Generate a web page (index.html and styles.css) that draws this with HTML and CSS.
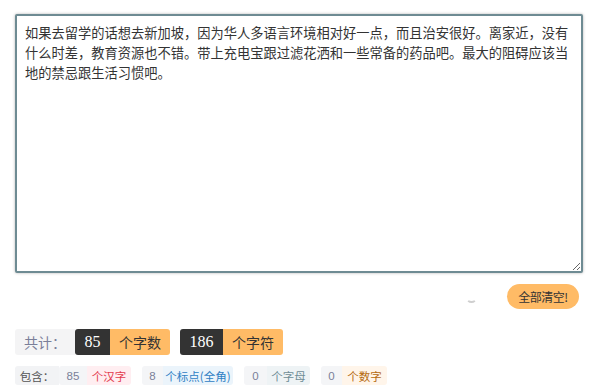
FILE: index.html
```html
<!DOCTYPE html>
<html lang="zh-CN">
<head>
    <meta charset="UTF-8">
    <meta name="viewport" content="width=device-width, initial-scale=1.0">
    <title>字数统计</title>
    <link rel="stylesheet" href="styles.css">
</head>
<body>
    <div class="page">
        <textarea id="content" class="editor">如果去留学的话想去新加坡，因为华人多语言环境相对好一点，而且治安很好。离家近，没有什么时差，教育资源也不错。带上充电宝跟过滤花洒和一些常备的药品吧。最大的阻碍应该当地的禁忌跟生活习惯吧。</textarea>
        <div class="toolbar">
            <span class="spinner"></span>
            <button id="clear-all" class="clear-btn">全部清空!</button>
        </div>
        <div class="totals">
            <span class="label">共计：</span>
            <span class="group">
                <span class="num">85</span>
                <span class="unit">个字数</span>
            </span>
            <span class="group">
                <span class="num wide">186</span>
                <span class="unit">个字符</span>
            </span>
        </div>
        <div class="details">
            <span class="tag-label">包含：</span>
            <span class="tag">
                <span class="tag-num n-hanzi">85</span>
                <span class="tag-unit hanzi">个汉字</span>
            </span>
            <span class="tag">
                <span class="tag-num">8</span>
                <span class="tag-unit punct">个标点(全角)</span>
            </span>
            <span class="tag">
                <span class="tag-num n-letter">0</span>
                <span class="tag-unit letter">个字母</span>
            </span>
            <span class="tag">
                <span class="tag-num">0</span>
                <span class="tag-unit digit">个数字</span>
            </span>
        </div>
    </div>
</body>
</html>
```

FILE: styles.css
```css
body {
    margin: 0;
    background: #fff;
    font-family: "Noto Sans CJK SC", "Liberation Sans", sans-serif;
    color: #333;
}
.page {
    padding: 14px 18px 0 15px;
}
.editor {
    display: block;
    box-sizing: border-box;
    width: 568px;
    height: 259px;
    margin: 0;
    padding: 7px 8px;
    border: 2px solid #6e8b93;
    border-radius: 2px;
    box-shadow: 0 0 3px rgba(0, 0, 0, 0.3);
    font-family: "Noto Sans CJK SC", sans-serif;
    font-size: 13.25px;
    line-height: 20px;
    color: #333;
    resize: both;
    outline: none;
}
.toolbar {
    display: flex;
    justify-content: flex-end;
    align-items: center;
    gap: 30px;
    width: 564px;
    margin-top: 11px;
}
.spinner {
    width: 7px;
    height: 7px;
    border-radius: 50%;
    border: 2px solid transparent;
    border-bottom-color: #cfcfcf;
    transform: rotate(0deg);
    margin-top: 2px;
}
.clear-btn {
    height: 25px;
    width: 72px;
    padding: 0;
    border: none;
    border-radius: 13px;
    background-color: #ffbb66;
    color: #333;
    font-family: "Noto Sans CJK SC", sans-serif;
    font-size: 12px;
    letter-spacing: -0.5px;
    cursor: pointer;
}
.totals {
    display: flex;
    align-items: center;
    gap: 10px;
    margin-top: 20px;
    height: 26px;
}
.label {
    display: flex;
    align-items: center;
    justify-content: center;
    width: 60px;
    height: 26px;
    margin-right: -10px;
    background: #f4f4f5;
    border-radius: 3px 0 0 3px;
    color: #7a7f99;
    font-size: 14px;
}
.group {
    display: flex;
    height: 26px;
    border-radius: 3px;
    overflow: hidden;
}
.num {
    display: flex;
    align-items: center;
    justify-content: center;
    width: 35px;
    background: #333;
    color: #fff;
    font-family: "Liberation Serif", serif;
    font-size: 16px;
}
.num.wide {
    width: 43px;
}
.unit {
    display: flex;
    align-items: center;
    justify-content: center;
    width: 60px;
    background: #ffbb66;
    color: #333;
    font-size: 14px;
}
.details {
    display: flex;
    align-items: center;
    gap: 11px;
    margin-top: 11px;
    font-size: 11.5px;
}
.tag-label {
    display: flex;
    align-items: center;
    justify-content: center;
    width: 44px;
    height: 19px;
    margin-right: -11px;
    background: #f2f3f5;
    border-radius: 3px 0 0 3px;
    color: #555;
}
.tag {
    display: flex;
    height: 19px;
    border-radius: 3px;
    overflow: hidden;
}
.tag-num {
    display: flex;
    align-items: center;
    justify-content: center;
    width: 21px;
    background: #f4f5f7;
    color: #7a7f99;
    font-family: "Liberation Sans", sans-serif;
    font-size: 11.5px;
}
.tag-num.n-hanzi {
    width: 28px;
}
.tag-num.n-letter {
    width: 23px;
}
.tag-unit {
    display: flex;
    align-items: center;
    justify-content: center;
    width: 44px;
}
.hanzi {
    background: #ffeef1;
    color: #e33b4e;
}
.punct {
    width: 70px;
    background: #ebf4fb;
    color: #2f80c4;
}
.letter {
    width: 43px;
    background: #eef3f5;
    color: #6f8d95;
}
.digit {
    width: 45px;
    background: #fff5ea;
    color: #b56a10;
}
```
